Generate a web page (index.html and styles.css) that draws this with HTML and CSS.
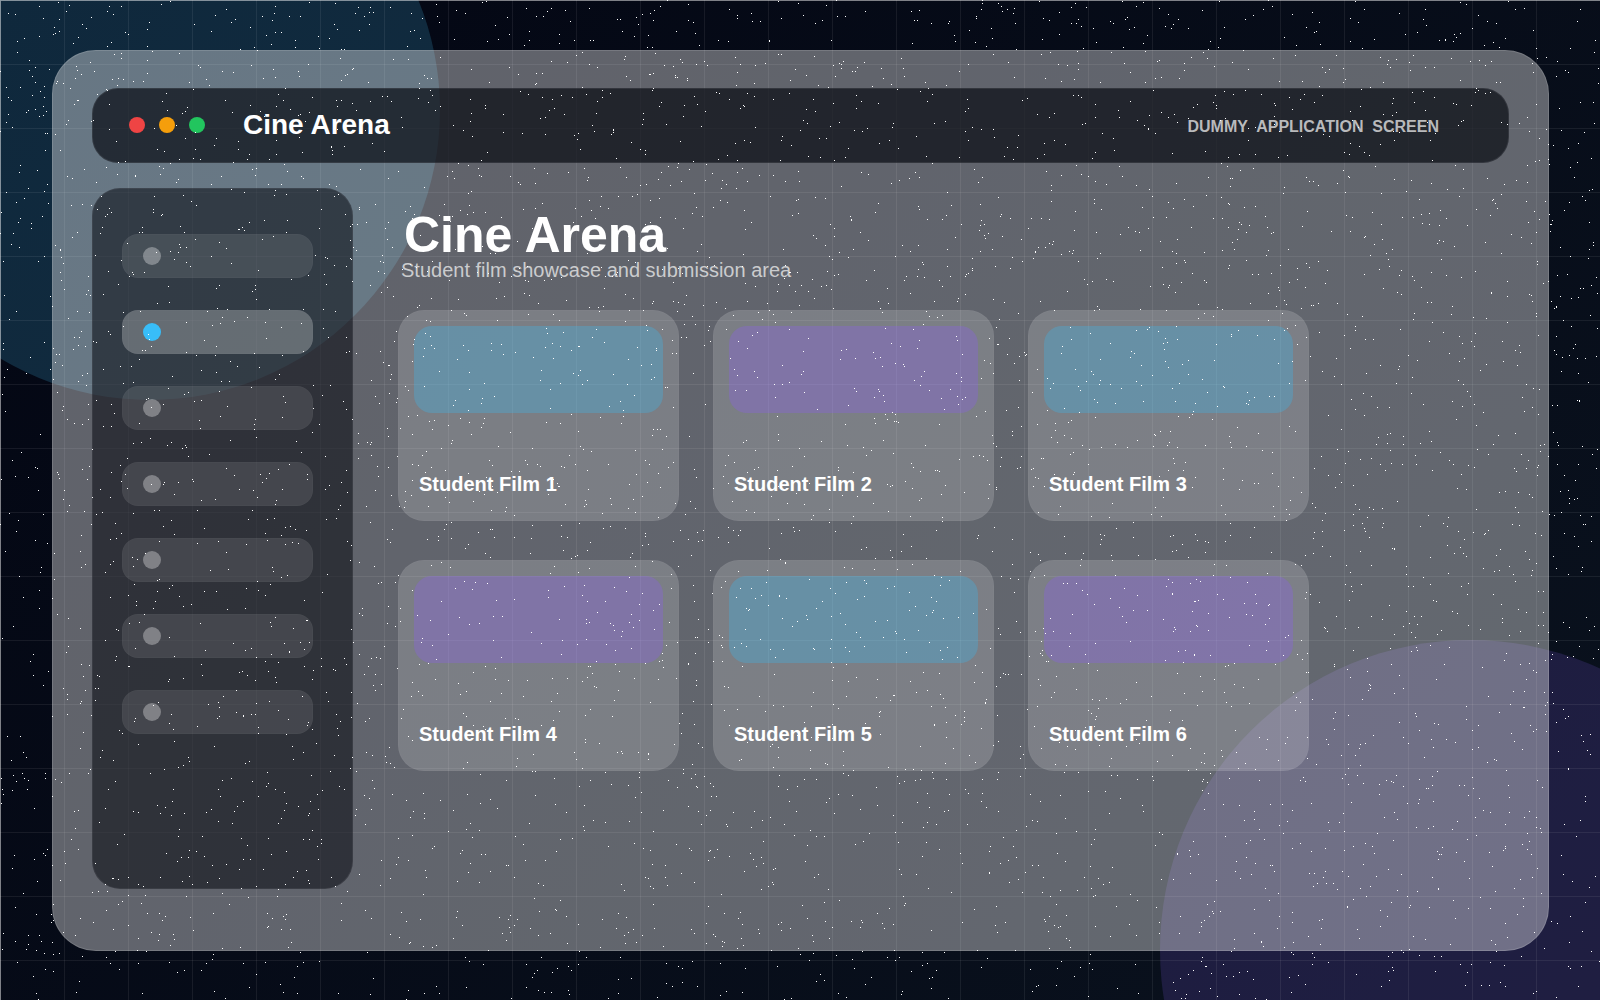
FILE: index.html
```html
<!DOCTYPE html>
<html lang="en">
<head>
  <meta charset="UTF-8">
  <meta name="viewport" content="width=device-width, initial-scale=1.0">
  <title>Cine Arena</title>
  <link rel="stylesheet" href="styles.css">
</head>
<body>
  <div class="backdrop">
    <div class="glow glow-blue"></div>
    <div class="glow glow-purple"></div>
    <div class="grid-lines"></div>
  </div>

  <div class="window">
    <header class="topbar">
      <div class="lights">
        <span class="light red"></span>
        <span class="light amber"></span>
        <span class="light green"></span>
      </div>
      <span class="app-name">Cine Arena</span>
      <span class="screen-tag">DUMMY&nbsp; APPLICATION&nbsp; SCREEN</span>
    </header>

    <div class="body">
      <nav class="sidebar" aria-label="Main">
        <a class="nav-item" href="#"><span class="dot"></span></a>
        <a class="nav-item active" href="#"><span class="dot"></span></a>
        <a class="nav-item" href="#"><span class="dot"></span></a>
        <a class="nav-item" href="#"><span class="dot"></span></a>
        <a class="nav-item" href="#"><span class="dot"></span></a>
        <a class="nav-item" href="#"><span class="dot"></span></a>
        <a class="nav-item" href="#"><span class="dot"></span></a>
      </nav>

      <main class="content">
        <h1>Cine Arena</h1>
        <p class="subtitle">Student film showcase and submission area</p>

        <div class="cards">
          <article class="card">
            <div class="thumb blue"></div>
            <h2>Student Film 1</h2>
          </article>
          <article class="card">
            <div class="thumb purple"></div>
            <h2>Student Film 2</h2>
          </article>
          <article class="card">
            <div class="thumb blue"></div>
            <h2>Student Film 3</h2>
          </article>
          <article class="card">
            <div class="thumb purple"></div>
            <h2>Student Film 4</h2>
          </article>
          <article class="card">
            <div class="thumb blue"></div>
            <h2>Student Film 5</h2>
          </article>
          <article class="card">
            <div class="thumb purple"></div>
            <h2>Student Film 6</h2>
          </article>
        </div>
      </main>
    </div>
  </div>

  <canvas class="stars" id="stars"></canvas>
  <script src="stars.js"></script>
</body>
</html>
```

FILE: styles.css
```css
* {
  margin: 0;
  padding: 0;
  box-sizing: border-box;
}

body {
  position: relative;
  min-height: 100vh;
  padding: 50px 51px 49px 52px;
  display: flex;
  font-family: "Liberation Sans", Arial, sans-serif;
  color: #fff;
  background: linear-gradient(135deg, #030613, #0a121e);
}

/* Background decoration */
.backdrop {
  position: absolute;
  inset: 0;
  overflow: hidden;
}

.glow {
  position: absolute;
  border-radius: 50%;
}

.glow-blue {
  width: 580px;
  height: 580px;
  left: -140px;
  top: -180px;
  background: rgba(70, 189, 240, 0.19);
}

.glow-purple {
  width: 620px;
  height: 620px;
  right: -180px;
  bottom: -260px;
  background: rgba(139, 92, 246, 0.17);
}

.grid-lines {
  position: absolute;
  inset: 0;
  border-top: 1px solid rgba(255, 255, 255, 0.45);
  border-left: 1px solid rgba(255, 255, 255, 0.45);
  background-image:
    linear-gradient(to right, rgba(255, 255, 255, 0.07) 1px, transparent 1px),
    linear-gradient(to bottom, rgba(255, 255, 255, 0.07) 1px, transparent 1px);
  background-size: 64px 64px;
  background-origin: border-box;
}

.stars {
  position: absolute;
  inset: 0;
  width: 100%;
  height: 100%;
  pointer-events: none;
}

/* Window */
.window {
  position: relative;
  flex: 1;
  display: flex;
  flex-direction: column;
  gap: 25px;
  padding: 37px 39px 61px;
  border: 1px solid rgba(255, 255, 255, 0.14);
  border-radius: 44px;
  background: rgba(255, 255, 255, 0.37);
}

.topbar {
  height: 75px;
  display: flex;
  align-items: center;
  padding: 0 69px 2px 36px;
  border: 1px solid rgba(255, 255, 255, 0.08);
  border-radius: 26px;
  background: rgba(2, 5, 12, 0.66);
}

.lights {
  display: flex;
  gap: 14px;
}

.light {
  width: 16px;
  height: 16px;
  border-radius: 50%;
}

.red {
  background: #ef4444;
}

.amber {
  background: #f59e0b;
}

.green {
  background: #22c55e;
}

.app-name {
  margin-left: 38px;
  font-size: 28px;
  font-weight: bold;
}

.screen-tag {
  margin-left: auto;
  padding-top: 4px;
  font-size: 16px;
  font-weight: bold;
  color: #b9babc;
}

.body {
  flex: 1;
  display: flex;
  gap: 45px;
}

/* Sidebar */
.sidebar {
  width: 261px;
  padding: 45px 39px 45px 29px;
  display: flex;
  flex-direction: column;
  gap: 32px;
  border: 1px solid rgba(255, 255, 255, 0.06);
  border-radius: 28px;
  background: rgba(2, 4, 12, 0.52);
}

.nav-item {
  height: 44px;
  padding-left: 20px;
  display: flex;
  align-items: center;
  border: 1px solid rgba(255, 255, 255, 0.02);
  border-radius: 16px;
  background: rgba(255, 255, 255, 0.1);
}

.nav-item.active {
  background: rgba(255, 255, 255, 0.25);
}

.dot {
  width: 18px;
  height: 18px;
  border-radius: 50%;
  background: rgba(255, 255, 255, 0.32);
}

.active .dot {
  background: #38bdf8;
}

/* Content */
.content {
  flex: 1;
  padding-top: 22px;
}

h1 {
  padding-left: 6px;
  font-size: 50px;
  line-height: 50px;
}

.subtitle {
  padding-left: 3px;
  font-size: 20px;
  line-height: 20px;
  color: #cbccce;
}

.cards {
  margin-top: 30px;
  display: grid;
  grid-template-columns: repeat(auto-fill, 281px);
  gap: 39px 34px;
}

.card {
  height: 211px;
  padding: 15px;
  border: 1px solid rgba(255, 255, 255, 0.02);
  border-radius: 26px;
  background: rgba(255, 255, 255, 0.17);
}

.thumb {
  height: 87px;
  border-radius: 18px;
}

.thumb.blue {
  background: rgba(56, 185, 242, 0.3);
}

.thumb.purple {
  background: rgba(139, 92, 246, 0.3);
}

.card h2 {
  margin-top: 59px;
  padding-left: 5px;
  font-size: 20px;
  line-height: 24px;
}
```

FILE: stars.js
```js
// Scatter single-pixel stars over the whole screen
var canvas = document.getElementById("stars");
canvas.width = window.innerWidth;
canvas.height = window.innerHeight;

var ctx = canvas.getContext("2d");
var seed = 42;

function random() {
  seed = (seed * 16807) % 2147483647;
  return seed / 2147483647;
}

ctx.fillStyle = "#fff";
var count = Math.round(canvas.width * canvas.height / 320);
for (var i = 0; i < count; i++) {
  var x = Math.floor(random() * canvas.width);
  var y = Math.floor(random() * canvas.height);
  ctx.fillRect(x, y, 1, 1);
}
```
